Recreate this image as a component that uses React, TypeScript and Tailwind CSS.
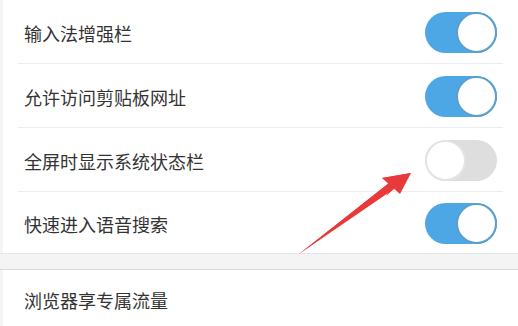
const rows = [
  { label: '输入法增强栏', on: true, h: 'h-[63px]' },
  { label: '允许访问剪贴板网址', on: true, h: 'h-[63px]' },
  { label: '全屏时显示系统状态栏', on: false, h: 'h-[63px]' },
  { label: '快速进入语音搜索', on: true, h: 'h-[61px]' },
];

function Toggle({ on }: { on: boolean }) {
  return (
    <div
      className={`flex h-[41px] w-[72px] shrink-0 items-center rounded-full ${
        on ? 'justify-end bg-[#4ea7e5]' : 'justify-start bg-[#dedede]'
      }`}
    >
      <div
        className={`h-[41px] w-[41px] rounded-full border-2 bg-white ${
          on ? 'border-[#5d9fcc]' : 'border-[#e4e4e4]'
        }`}
      />
    </div>
  );
}

export default function App() {
  return (
    <div
      className="relative h-[326px] w-[518px] overflow-hidden bg-white text-[#333333]"
      style={{ fontFamily: '"Noto Sans CJK SC", "Noto Sans", sans-serif' }}
    >
      <div className="border-l-[3px] border-[#f5f5f5]">
        <div className="ml-[15px] mr-[15px]">
          {rows.map((row, i) => (
            <div key={row.label}>
              <div className={`flex ${row.h} items-center justify-between px-[6px] pt-[2px]`}>
                <span className="text-[18px] leading-none">{row.label}</span>
                <Toggle on={row.on} />
              </div>
              {i < rows.length - 1 && <div className="h-px bg-[#ececec]" />}
            </div>
          ))}
        </div>
      </div>

      {/* section gap */}
      <div className="h-[17px] border-y border-t-[#e6e6e6] border-b-[#d9d9d9] bg-[#f4f4f4]" />

      <div className="border-l-[3px] border-[#f5f5f5]">
        <div className="ml-[15px] flex h-[60px] items-center px-[6px]">
          <span className="text-[18px] leading-none">浏览器享专属流量</span>
        </div>
      </div>

      {/* annotation arrow */}
      <svg className="pointer-events-none absolute left-0 top-0" width="518" height="326" viewBox="0 0 518 326">
        <polygon points="299,254 390,189 386,196 411,173 382,178 389,183" fill="#e8393b" />
        <polygon points="299,254 389,183 394,189" fill="#e8393b" />
        <polygon points="411,173 382,178 400,194" fill="#e8393b" />
      </svg>
    </div>
  );
}
